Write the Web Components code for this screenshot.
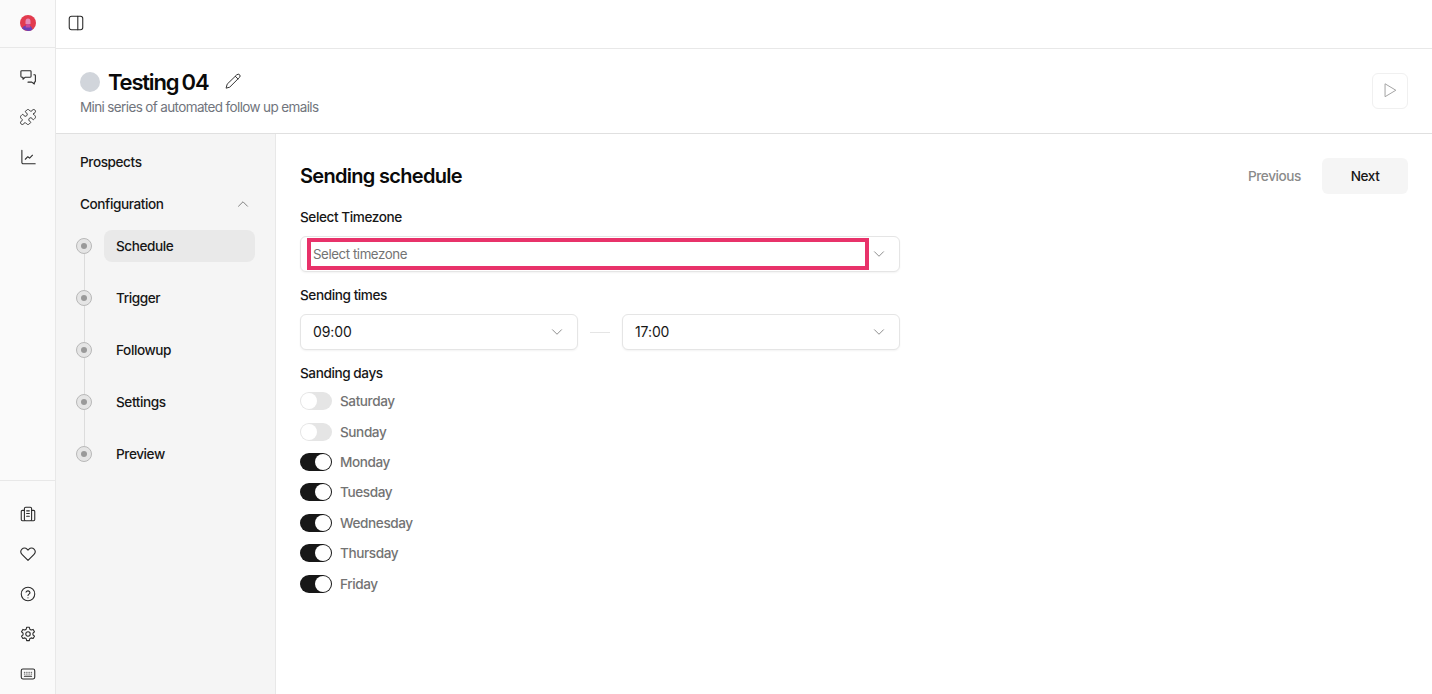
<!DOCTYPE html>
<html lang="en">
<head>
<meta charset="utf-8">
<title>Sending schedule</title>
<style>
html,body{margin:0;height:100%;background:#fff;font-family:Inter,"Liberation Sans",sans-serif;color:#111;overflow:hidden}
</style>
</head>
<body>
<app-shell></app-shell>
<script>
const F='Inter,"Liberation Sans",sans-serif';
const BODY=`font:500 13.6px/20px ${F};letter-spacing:-.42px`;
const I = {
 chat:'<path d="M3 3h9.500a.9.9 0 0 1 .9.9v5.400a.9.9 0 0 1-.9.9H7L4.400 12.500v-2.300H3a.9.9 0 0 1-.9-.9V3.900A.9.9 0 0 1 3 3z"/><path d="M16.500 7.500h.8a.9.9 0 0 1 .9.9v6.400a.9.9 0 0 1-.9.9H17v2.100l-2.800-2.100H10"/>',
 puzzle:'<path transform="scale(.8333)" d="M19.439 7.85c-.049.322.059.648.289.878l1.568 1.568c.47.47.706 1.087.706 1.704s-.235 1.233-.706 1.704l-1.611 1.611a.98.98 0 0 1-.837.276c-.47-.07-.802-.48-.968-.925a2.501 2.501 0 1 0-3.214 3.214c.446.166.855.497.925.968a.979.979 0 0 1-.276.837l-1.61 1.61a2.404 2.404 0 0 1-1.705.707 2.402 2.402 0 0 1-1.704-.706l-1.568-1.568a1.026 1.026 0 0 0-.877-.29c-.493.074-.84.504-1.02.968a2.5 2.5 0 1 1-3.237-3.237c.464-.18.894-.527.967-1.02a1.026 1.026 0 0 0-.289-.877l-1.568-1.568A2.402 2.402 0 0 1 1.998 12c0-.617.236-1.234.706-1.704L4.23 8.77c.24-.24.581-.353.917-.303.515.077.877.528 1.073 1.01a2.5 2.5 0 1 0 3.259-3.259c-.482-.196-.933-.558-1.01-1.073-.05-.336.062-.676.303-.917l1.525-1.525A2.402 2.402 0 0 1 12 1.998c.617 0 1.234.236 1.704.706l1.568 1.568c.23.23.556.338.877.29.493-.074.84-.504 1.02-.968a2.5 2.5 0 1 1 3.237 3.237c-.464.18-.894.527-.967 1.020Z"/>',
 chart:'<path d="M3.200 2.500V16a1.500 1.500 0 0 0 1.500 1.500H18"/><path d="M7 12.500l2.800-2.800 2 1.500 3.200-3.200"/>',
 book:'<rect x="6" y="2.500" width="8" height="15" rx="1.500"/><path d="M6 6H3.800A1.300 1.300 0 0 0 2.500 7.300v8.900A1.300 1.300 0 0 0 3.800 17.500H6M14 6h2.200a1.300 1.300 0 0 1 1.300 1.300v8.900a1.300 1.300 0 0 1-1.300 1.300H14M8.500 6.500h3M8.500 9.500h3M8.500 12.500h3"/>',
 heart:'<path d="M10 17.200 3.300 10.300a4.100 4.100 0 0 1 0-5.700 3.900 3.900 0 0 1 5.600 0l1.100 1.100 1.100-1.100a3.900 3.900 0 0 1 5.600 0 4.100 4.100 0 0 1 0 5.700z"/>',
 help:'<circle cx="10" cy="10" r="7.500"/><path d="M7.800 7.900a2.300 2.300 0 0 1 4.400.6c0 1.500-2.200 1.900-2.200 3.200"/><path d="M10 14.200v.100"/>',
 gear:'<circle cx="10" cy="10" r="2.500"/><path d="M8.500 2.500h3l.5 2.200 1.500.9 2.200-.7 1.500 2.600-1.700 1.500v1.900l1.700 1.500-1.500 2.600-2.200-.7-1.500.9-.5 2.200h-3l-.5-2.200-1.500-.9-2.200.7-1.500-2.600 1.700-1.500V9l-1.700-1.500 1.500-2.600 2.200.7 1.500-.9z"/>',
 keyboard:'<rect x="2.500" y="4.500" width="15" height="11" rx="1.800"/><path d="M6 12.500h8"/><path d="M6 8h.01M8 8h.01M10 8h.01M12 8h.01M14 8h.01M6 10h.01M8 10h.01M10 10h.01M12 10h.01M14 10h.01"/>',
 panel:'<rect x="2.500" y="2.500" width="15" height="15" rx="2.500"/><path d="M12 2.500v15"/>',
 pencil:'<path d="M12.700 3.300a1.700 1.700 0 0 1 2.400 2.400l-9 9-3.300.9.900-3.300zM11.200 4.800l2.400 2.400"/>',
 play:'<path d="M5.500 3.800v11.400l9.500-5.700z"/>',
 down:'<path d="M5 7.500l5 5 5-5"/>',
 up:'<path d="M5 12.500l5-5 5 5"/>'
};
function svg(name,size,color,sw){
 return `<svg width="${size}" height="${size}" viewBox="0 0 20 20" fill="none" stroke="${color}" stroke-width="${sw}" stroke-linecap="round" stroke-linejoin="round" style="display:block">${I[name]}</svg>`;
}
customElements.define('ui-icon',class extends HTMLElement{
 connectedCallback(){
  if(this.shadowRoot)return;
  const s=this.getAttribute('size')||18;
  this.attachShadow({mode:'open'}).innerHTML=`<style>:host{display:block;width:${s}px;height:${s}px;flex:none}</style>`+svg(this.getAttribute('name'),s,this.getAttribute('color')||'#2a2a2a',this.getAttribute('sw')||1.200);
 }
});
customElements.define('icon-rail',class extends HTMLElement{
 constructor(){super();this.attachShadow({mode:'open'}).innerHTML=`<style>
 :host{display:flex;flex-direction:column;width:55px;flex:none;background:#fafafa;border-right:1px solid #e8e8e8;height:694px}
 .logo{height:48px;flex:none;border-bottom:1px solid #e8e8e8;display:flex;align-items:center;justify-content:center;padding-bottom:1px;box-sizing:border-box}
 .top{flex:1;display:flex;flex-direction:column;align-items:center;gap:22px;padding-top:20px;border-bottom:1px solid #e8e8e8}
 .bot{height:213px;box-sizing:border-box;flex:none;display:flex;flex-direction:column;align-items:center;gap:22px;padding-top:24px}
 </style>
 <div class="logo"><svg width="16" height="16" viewBox="0 0 16 16" style="display:block"><circle cx="8" cy="8" r="8" fill="#e23b4e"/><path d="M2 13.200C3.500 10.800 5.500 10.500 8 10.500s3.500.8 4.500 4.200A8 8 0 0 1 8 16a8 8 0 0 1-6-2.800z" fill="#6a3fb5"/><path d="M5.500 6.500a2.500 3 0 0 1 5 0v2.500h-5z" fill="#e58ab8"/><path d="M6.500 9h3l1 3.500h-5z" fill="#c84a9a"/></svg></div>
 <div class="top"><ui-icon name="chat"></ui-icon><ui-icon name="puzzle"></ui-icon><ui-icon name="chart"></ui-icon></div>
 <div class="bot"><ui-icon name="book"></ui-icon><ui-icon name="heart"></ui-icon><ui-icon name="help"></ui-icon><ui-icon name="gear"></ui-icon><ui-icon name="keyboard"></ui-icon></div>`;}
});
customElements.define('top-bar',class extends HTMLElement{
 constructor(){super();this.attachShadow({mode:'open'}).innerHTML=`<style>
 :host{display:flex;align-items:center;flex:none;border-bottom:1px solid #e8e8e8;padding-left:11px;padding-bottom:3px;box-sizing:content-box;height:45px}
 </style><ui-icon name="panel" size="18" sw="1.200"></ui-icon>`;}
});
customElements.define('page-header',class extends HTMLElement{
 constructor(){super();this.attachShadow({mode:'open'}).innerHTML=`<style>
 :host{display:flex;justify-content:space-between;align-items:center;height:85px;flex:none;box-sizing:border-box;border-bottom:1px solid #e0e0e0;padding:0 24px}
 .left{margin-top:2px}
 .row{display:flex;align-items:center;height:26px}
 .dot{width:20px;height:20px;border-radius:50%;background:#d1d5db;margin-right:8px}
 h1{margin:0;font:600 22px/26px ${F};letter-spacing:-1.200px;word-spacing:-1px;color:#0a0a0a;margin-right:15px}
 p{margin:4px 0 0;font:400 13.500px/17px ${F};letter-spacing:-.63px;color:#71757d}
 .play{width:36px;height:36px;box-sizing:border-box;border:1px solid #f0f0f0;border-radius:6px;display:flex;align-items:center;justify-content:center;margin-top:-1px}
 </style>
 <div class="left"><div class="row"><span class="dot"></span><h1>Testing 04</h1><ui-icon name="pencil" size="22" color="#333" sw=".9"></ui-icon></div><p>Mini series of automated follow up emails</p></div>
 <div class="play"><ui-icon name="play" size="22" color="#a3a3a3" sw=".9"></ui-icon></div>`;}
});
customElements.define('step-item',class extends HTMLElement{
 constructor(){super();const a=this.hasAttribute('active'),l=this.hasAttribute('last');this.attachShadow({mode:'open'}).innerHTML=`<style>
 :host{display:flex;height:52px}
 .track{width:16px;flex:none;margin-left:20px;display:flex;flex-direction:column;align-items:center;padding-top:8px;box-sizing:border-box}
 .c{width:16px;height:16px;box-sizing:border-box;border-radius:50%;background:#e5e5e5;border:1px solid #b8b8b8;display:flex;align-items:center;justify-content:center;flex:none}
 .c i{width:6px;height:6px;border-radius:50%;background:#9a9a9a}
 .line{width:1px;flex:none;height:36px;background:#dcdcdc;${l?'display:none':''}}
 .lbl{margin-left:12px;width:151px;height:32px;box-sizing:border-box;padding-left:12px;display:flex;align-items:center;border-radius:8px;${BODY};color:#171717;${a?'background:#e9e9e9':''}}
 </style><div class="track"><div class="c"><i></i></div><div class="line"></div></div><div class="lbl"><slot></slot></div>`;}
});
customElements.define('side-nav',class extends HTMLElement{
 constructor(){super();this.attachShadow({mode:'open'}).innerHTML=`<style>
 :host{display:block;width:219px;flex:none;background:#f5f5f5;border-right:1px solid #e8e8e8;box-sizing:content-box;${BODY};color:#171717}
 .h{height:20px;padding:0 24px;display:flex;align-items:center;justify-content:space-between}
 .p{margin-top:18px}
 .c{margin-top:22px;margin-bottom:16px}
 .c ui-icon{margin-right:-1px}
 </style>
 <div class="h p">Prospects</div>
 <div class="h c">Configuration<ui-icon name="up" size="18" color="#666" sw=".9"></ui-icon></div>
 <div><slot></slot></div>`;}
});
customElements.define('field-label',class extends HTMLElement{
 constructor(){super();this.attachShadow({mode:'open'}).innerHTML=`<style>
 :host{display:block;${BODY};color:#171717}
 </style><slot></slot>`;}
});
customElements.define('select-box',class extends HTMLElement{
 constructor(){super();const ph=this.hasAttribute('placeholder');this.attachShadow({mode:'open'}).innerHTML=`<style>
 :host{display:flex;flex:1;align-items:center;justify-content:space-between;height:36px;box-sizing:border-box;border:1px solid #e5e5e5;border-radius:6px;background:#fff;box-shadow:0 1px 2px rgba(0,0,0,.05);padding:0 11px 0 12px;font:400 14px/20px ${F};letter-spacing:-.1px;color:${ph?'#737373':'#171717'};${ph?'font-size:13.300px;letter-spacing:-.43px':''}}
 </style><span><slot></slot></span><ui-icon name="down" size="18" color="#737373" sw=".9"></ui-icon>`;}
});
customElements.define('day-toggle',class extends HTMLElement{
 constructor(){super();const on=this.hasAttribute('on');this.attachShadow({mode:'open'}).innerHTML=`<style>
 :host{display:flex;align-items:center;gap:8px;height:18px;font:500 13.600px/18px ${F};letter-spacing:-.42px;color:#737373}
 .t{width:32px;height:18px;box-sizing:border-box;border-radius:9px;background:${on?'#171717':'#e5e5e5'};display:flex;align-items:center;padding:1px;justify-content:${on?'flex-end':'flex-start'}}
 .k{width:16px;height:16px;border-radius:50%;background:#fff}
 </style><span class="t"><span class="k"></span></span><span><slot></slot></span>`;}
});
customElements.define('schedule-panel',class extends HTMLElement{
 constructor(){super();this.attachShadow({mode:'open'}).innerHTML=`<style>
 :host{display:block;flex:1;padding:24px 24px 0;box-sizing:border-box;min-width:0}
 .head{display:flex;justify-content:space-between;align-items:center;height:36px}
 h2{margin:0;font:600 20px/28px ${F};letter-spacing:-.7px;color:#0a0a0a}
 .nav{display:flex;align-items:center}
 .prev{${BODY};color:#8a8a8a;margin-right:21px}
 .next{width:86px;height:36px;border-radius:6px;background:#f5f5f5;display:flex;align-items:center;justify-content:center;${BODY};color:#171717}
 .form{width:600px;margin-top:13px;display:flex;flex-direction:column}
 .sel{position:relative;display:flex;margin-top:9px}
 .mark{position:absolute;left:7px;top:2px;width:562px;height:32px;box-sizing:border-box;border:4px solid #e8326a;pointer-events:none}
 .times{display:flex;align-items:center;margin-top:9px}
 .dash{width:20px;height:1px;background:#e5e5e5;margin:0 12px;flex:none}
 .l2{margin-top:13px}
 .days{display:flex;flex-direction:column;gap:12.400px;margin-top:9.200px}
 </style>
 <div class="head"><h2>Sending schedule</h2><div class="nav"><span class="prev">Previous</span><span class="next">Next</span></div></div>
 <div class="form">
  <field-label>Select Timezone</field-label>
  <div class="sel"><select-box placeholder>Select timezone</select-box><div class="mark"></div></div>
  <field-label class="l2">Sending times</field-label>
  <div class="times"><select-box>09:00</select-box><span class="dash"></span><select-box>17:00</select-box></div>
  <field-label class="l2">Sanding days</field-label>
  <div class="days">
   <day-toggle>Saturday</day-toggle><day-toggle>Sunday</day-toggle>
   <day-toggle on>Monday</day-toggle><day-toggle on>Tuesday</day-toggle><day-toggle on>Wednesday</day-toggle><day-toggle on>Thursday</day-toggle><day-toggle on>Friday</day-toggle>
  </div>
 </div>`;}
});
customElements.define('app-shell',class extends HTMLElement{
 constructor(){super();this.attachShadow({mode:'open'}).innerHTML=`<style>
 :host{display:flex;width:1432px;height:694px;overflow:hidden}
 .col{flex:1;display:flex;flex-direction:column;min-width:0}
 .body{flex:1;display:flex;min-height:0}
 </style>
 <icon-rail></icon-rail>
 <div class="col"><top-bar></top-bar><page-header></page-header>
 <div class="body"><side-nav>
  <step-item active>Schedule</step-item><step-item>Trigger</step-item><step-item>Followup</step-item><step-item>Settings</step-item><step-item last>Preview</step-item>
 </side-nav><schedule-panel></schedule-panel></div></div>`;}
});
</script>
</body>
</html>
